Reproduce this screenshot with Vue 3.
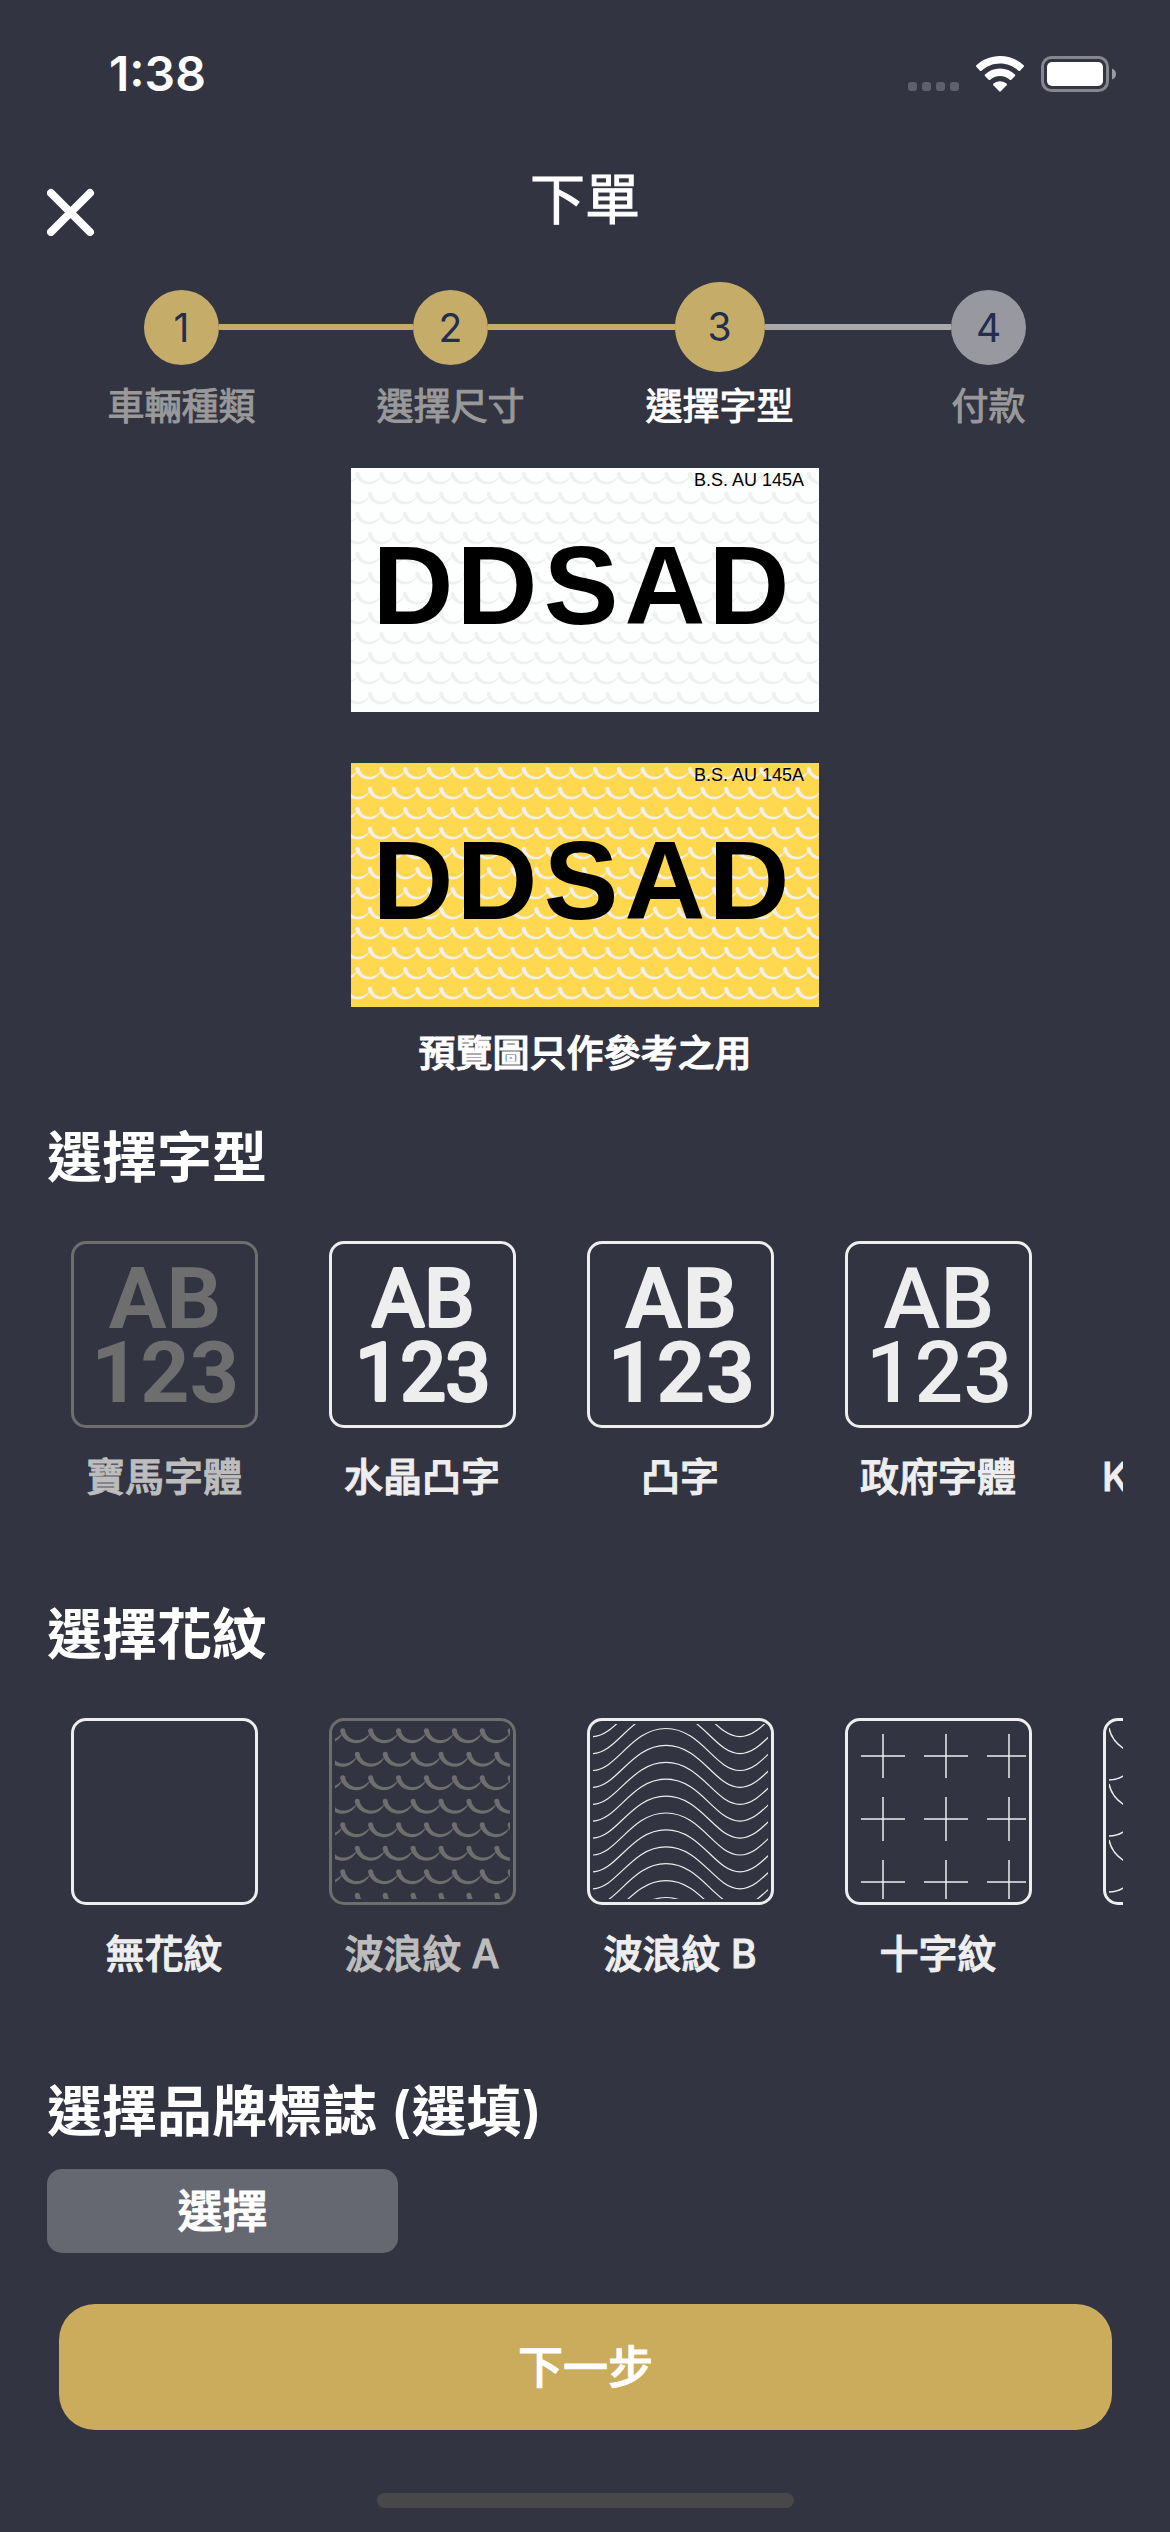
<script setup>
import { ref } from 'vue'

const steps = [
  { n: 1, label: '車輛種類', state: 'done' },
  { n: 2, label: '選擇尺寸', state: 'done' },
  { n: 3, label: '選擇字型', state: 'current' },
  { n: 4, label: '付款', state: 'todo' }
]

const plateText = 'DDSAD'
const plates = [
  { id: 'front', face: '#fdfffe', wave: '#eff0f0' },
  { id: 'rear', face: '#ffd850', wave: '#f2f0ea' }
]

const fonts = [
  { id: 'bmw', label: '寶馬字體' },
  { id: 'crystal', label: '水晶凸字' },
  { id: 'raised', label: '凸字' },
  { id: 'gov', label: '政府字體' }
]

const patterns = [
  { id: 'none', label: '無花紋' },
  { id: 'waveA', label: '波浪紋 A' },
  { id: 'waveB', label: '波浪紋 B' },
  { id: 'cross', label: '十字紋' },
  { id: 'scale', label: '' }
]

const font = ref('bmw')
const pattern = ref('waveA')

const wave =
  'M-2.2 2.5Q-2.2 0 0 0Q2.2 0 2.2 2.5C3 6.500 7 10 12 10C17 10 20 7.5 23.7 4C21 9.500 17 12.600 11.5 12.600C5 12.600 -.5 9 -2.2 2.5Z'

// Scalloped rows; every second row is shifted by half a period.
function scallops(rows, cols) {
  const out = []
  for (let r = 0; r < rows; r++) {
    for (let c = -1; c < cols; c++) {
      out.push({ key: r + '-' + c, t: `translate(${6.6 + c * 23.75 + (r % 2) * 12.4} ${3.7 + r * 20})` })
    }
  }
  return out
}
const plateWaves = scallops(12, 20)
const thumbWaves = scallops(8, 7)

const swells = Array.from({ length: 14 }, (_, i) => {
  const c = 4.5 + (i - 3) * 16.9
  const t = c + 42
  return `M-1 ${t}C24 ${t} 38 ${c} 73 ${c}C108 ${c} 122 ${t} 147 ${t}C172 ${t} 186 ${c} 221 ${c}`
}).join('')

const crosses = [32, 95, 158]
  .map((y) => [32, 95, 158].map((x) => `M${x - 22} ${y}h44M${x} ${y - 22}v44`).join(''))
  .join('')

const scales = [4, 60, 116]
  .map((y) => `M0 ${y}C2 ${y + 10} 8 ${y + 17} 17 ${y + 22}M0 ${y + 52}C6 ${y + 52} 12 ${y + 50} 17 ${y + 46}`)
  .join('')
</script>

<template>
  <div class="screen">
    <div class="status">
      <span class="time">1:38</span>
      <div class="indicators">
        <svg width="51" height="36" viewBox="0 0 51 36" aria-hidden="true">
          <rect v-for="i in 4" :key="i" :x="(i - 1) * 14" y="26" width="9" height="9" rx="3" fill="#60606d" />
        </svg>
        <svg class="wifi" width="48" height="36" viewBox="0 0 48 36" aria-hidden="true">
          <g fill="#fff">
            <path d="M24 0C33 0 41.500 3.500 47.600 9.200Q48.400 10 47.700 10.800L44 14.700Q43.300 15.400 42.500 14.700C37.500 10.200 31 7.400 24 7.400S10.500 10.200 5.500 14.700Q4.700 15.400 4 14.700L.3 10.800Q-.4 10 .4 9.200C6.500 3.500 15 0 24 0Z" />
            <path d="M24 12.600C29.800 12.600 35 14.800 39 18.400Q39.800 19.200 39 20L35.300 23.700Q34.600 24.400 33.800 23.700C31.200 21.400 27.800 20 24 20S16.800 21.400 14.200 23.700Q13.400 24.400 12.700 23.700L9 20Q8.200 19.200 9 18.400C13 14.800 18.200 12.600 24 12.600Z" />
            <path d="M24 25.200C26.500 25.200 28.800 26.100 30.500 27.600Q31.300 28.400 30.600 29.200L24.800 35.300Q24 36 23.200 35.300L17.400 29.200Q16.700 28.400 17.500 27.600C19.200 26.100 21.500 25.200 24 25.200Z" />
          </g>
        </svg>
        <svg width="75" height="36" viewBox="0 0 75 36" aria-hidden="true">
          <rect x="1.500" y="1.500" width="65" height="33" rx="9" fill="none" stroke="#86868e" stroke-width="3" />
          <rect x="6" y="6" width="56" height="24" rx="5" fill="#fff" />
          <path d="M71 12.500Q75 14 75 18T71 23.500Z" fill="#9a9aa2" />
        </svg>
      </div>
    </div>

    <header class="header">
      <button class="close" type="button" aria-label="關閉">
        <svg width="48" height="48" viewBox="0 0 48 48" aria-hidden="true">
          <path d="M4 5L43 44M43 5L4 44" stroke="#fff" stroke-width="8" stroke-linecap="round" />
        </svg>
      </button>
      <h1>下單</h1>
    </header>

    <ol class="steps">
      <li v-for="s in steps" :key="s.n" :class="s.state">
        <div class="track">
          <i class="line before"></i>
          <span class="dot">{{ s.n }}</span>
          <i class="line after"></i>
        </div>
        <span class="step-label">{{ s.label }}</span>
      </li>
    </ol>

    <section class="preview">
      <div v-for="p in plates" :key="p.id" class="plate" :class="p.id">
        <svg class="plate-art" viewBox="0 0 468 244" aria-hidden="true">
          <rect width="468" height="244" :fill="p.face" />
          <g :fill="p.wave">
            <path v-for="w in plateWaves" :key="w.key" :d="wave" :transform="w.t" />
          </g>
        </svg>
        <span class="standard">B.S. AU 145A</span>
        <div class="mark">
          <span v-for="(ch, i) in plateText" :key="i">{{ ch }}</span>
        </div>
      </div>
      <p class="note">預覽圖只作參考之用</p>
    </section>

    <section class="group">
      <h2>選擇字型</h2>
      <div class="scroller">
        <button
          v-for="f in fonts"
          :key="f.id"
          type="button"
          class="option"
          :class="{ chosen: font === f.id }"
          :aria-pressed="font === f.id"
          @click="font = f.id"
        >
          <span class="thumb">
            <svg width="175" height="175" viewBox="0 0 175 175" class="sample" :class="f.id" aria-hidden="true">
              <text>
                <tspan x="88" :y="f.id === 'crystal' ? 79 : 81">AB</tspan>
                <tspan x="88" dy="74">123</tspan>
              </text>
            </svg>
          </span>
          <span class="caption">{{ f.label }}</span>
        </button>
        <button type="button" class="option plain"><span class="caption">K</span></button>
      </div>
    </section>

    <section class="group">
      <h2>選擇花紋</h2>
      <div class="scroller">
        <button
          v-for="p in patterns"
          :key="p.id"
          type="button"
          class="option"
          :class="{ chosen: pattern === p.id }"
          :aria-pressed="pattern === p.id"
          @click="pattern = p.id"
        >
          <span class="thumb">
            <svg width="175" height="175" viewBox="0 0 175 175" class="motif" aria-hidden="true">
              <g v-if="p.id === 'waveA'" class="solid" transform="scale(1.175)">
                <path v-for="w in thumbWaves" :key="w.key" :d="wave" :transform="w.t" />
              </g>
              <path v-else-if="p.id === 'waveB'" :d="swells" stroke-width="1.200" />
              <path v-else-if="p.id === 'cross'" :d="crosses" stroke-width="1.500" />
              <path v-else-if="p.id === 'scale'" :d="scales" stroke-width="1.500" />
            </svg>
          </span>
          <span class="caption">{{ p.label }}</span>
        </button>
      </div>
    </section>

    <section class="group">
      <h2>選擇品牌標誌 (選填)</h2>
      <button type="button" class="pick">選擇</button>
    </section>

    <footer class="footer">
      <button type="button" class="next">下一步</button>
      <div class="home"></div>
    </footer>
  </div>
</template>

<style>
body {
  margin: 0;
  background: #333441;
}
</style>

<style scoped>
.screen {
  min-height: 100vh;
  box-sizing: border-box;
  background: #333441;
  color: #fff;
  font-family: Inter, "Noto Sans CJK TC", sans-serif;
  font-weight: 500;
  overflow: hidden;
}
button {
  margin: 0;
  padding: 0;
  border: 0;
  background: none;
  color: inherit;
  font: inherit;
}
svg {
  display: block;
}
h1,
.step-label,
.note,
.caption,
.pick,
.next {
  -webkit-text-stroke: 1px currentColor;
}
.status {
  display: flex;
  align-items: center;
  justify-content: space-between;
  padding: 50px 54px 0 109px;
}
.time {
  font-size: 48px;
  line-height: 48px;
  font-weight: 600;
}
.indicators {
  display: flex;
  align-items: center;
}
.wifi {
  margin: 0 17px;
}
.header {
  display: grid;
  grid-template-columns: 1fr auto 1fr;
  padding: 72px 47px 0;
}
.close {
  width: 48px;
  height: 48px;
  margin-top: 18px;
}
h1 {
  margin: 0;
  font-size: 55px;
  line-height: 58px;
  font-weight: 400;
}
.steps {
  display: grid;
  grid-template-columns: repeat(4, 1fr);
  margin: 46px 0 0;
  padding: 0 47px;
  list-style: none;
}
.steps li {
  text-align: center;
}
.track {
  display: flex;
  align-items: center;
  height: 90px;
  margin-bottom: 13px;
}
.line {
  flex: 1;
  height: 6px;
  background: #c5ad69;
}
.current .after,
.todo .before {
  background: #a9a9aa;
}
.steps li:first-child .before,
.steps li:last-child .after {
  background: none;
}
.dot {
  width: 75px;
  height: 75px;
  border-radius: 50%;
  background: #c5ad69;
  color: #222e4e;
  font-size: 39px;
  line-height: 75px;
  font-weight: 400;
}
.current .dot {
  width: 90px;
  height: 90px;
  line-height: 90px;
}
.todo .dot {
  background: #9898a1;
}
.step-label {
  display: block;
  font-size: 37px;
  line-height: 44px;
  font-weight: 400;
  color: #999;
}
.current .step-label {
  color: #fff;
}
.preview {
  display: flex;
  flex-direction: column;
  align-items: center;
  padding-top: 39px;
}
.plate {
  position: relative;
  width: 468px;
  height: 244px;
  color: #000;
  font-family: "Liberation Sans", sans-serif;
}
.plate + .plate {
  margin-top: 51px;
}
.plate-art {
  position: absolute;
  inset: 0;
}
.standard {
  position: relative;
  display: block;
  padding-right: 15px;
  text-align: right;
  font-size: 18px;
  line-height: 24px;
  font-weight: 400;
}
.mark {
  position: relative;
  display: grid;
  grid-template-columns: repeat(5, 84px);
  margin-top: 38px;
  padding-left: 20px;
  font-size: 112px;
  line-height: 112px;
  font-weight: 700;
  text-align: center;
}
.note {
  margin: 25px 0 0;
  font-size: 37px;
  line-height: 44px;
}
.group {
  padding: 103px 47px 0;
}
.preview + .group {
  padding-top: 51px;
}
h2 {
  margin: 0;
  font-size: 55px;
  line-height: 60px;
  font-weight: 600;
}
.scroller {
  display: flex;
  gap: 70px;
  margin-top: 54px;
  padding-left: 23px;
  overflow: hidden;
  color: #eee;
}
.option {
  display: flex;
  flex: none;
  flex-direction: column;
  align-items: center;
  gap: 25px;
  width: 188px;
}
.plain {
  align-items: flex-start;
  justify-content: flex-end;
}
.thumb {
  box-sizing: border-box;
  width: 187px;
  height: 187px;
  padding: 3px;
  border: 3px solid currentColor;
  border-radius: 15px;
}
.caption {
  font-size: 39px;
  line-height: 48px;
  min-height: 48px;
  white-space: nowrap;
}
.chosen .thumb {
  color: #6e6e6e;
}
.chosen .caption {
  color: #bdbdbd;
}
.sample {
  fill: currentColor;
  font-family: Roboto, sans-serif;
  font-size: 86px;
  font-weight: 700;
  text-anchor: middle;
}
.sample.crystal {
  font-size: 80px;
  font-weight: 400;
  stroke: currentColor;
  stroke-width: 4px;
  stroke-linejoin: round;
}
.sample.gov {
  font-weight: 500;
}
.motif {
  fill: none;
  stroke: currentColor;
}
.solid {
  fill: currentColor;
  stroke: none;
}
.pick {
  display: block;
  width: 351px;
  height: 84px;
  margin-top: 28px;
  padding-bottom: 5px;
  border-radius: 15px;
  background: #656870;
  font-size: 45px;
}
.footer {
  padding: 51px 58px 24px 59px;
}
.next {
  display: block;
  width: 100%;
  height: 126px;
  padding-bottom: 5px;
  border-radius: 36px;
  background: #cbab5c;
  font-size: 45px;
}
.home {
  width: 417px;
  height: 15px;
  margin: 63px auto 0;
  border-radius: 8px;
  background: #484848;
}
</style>
